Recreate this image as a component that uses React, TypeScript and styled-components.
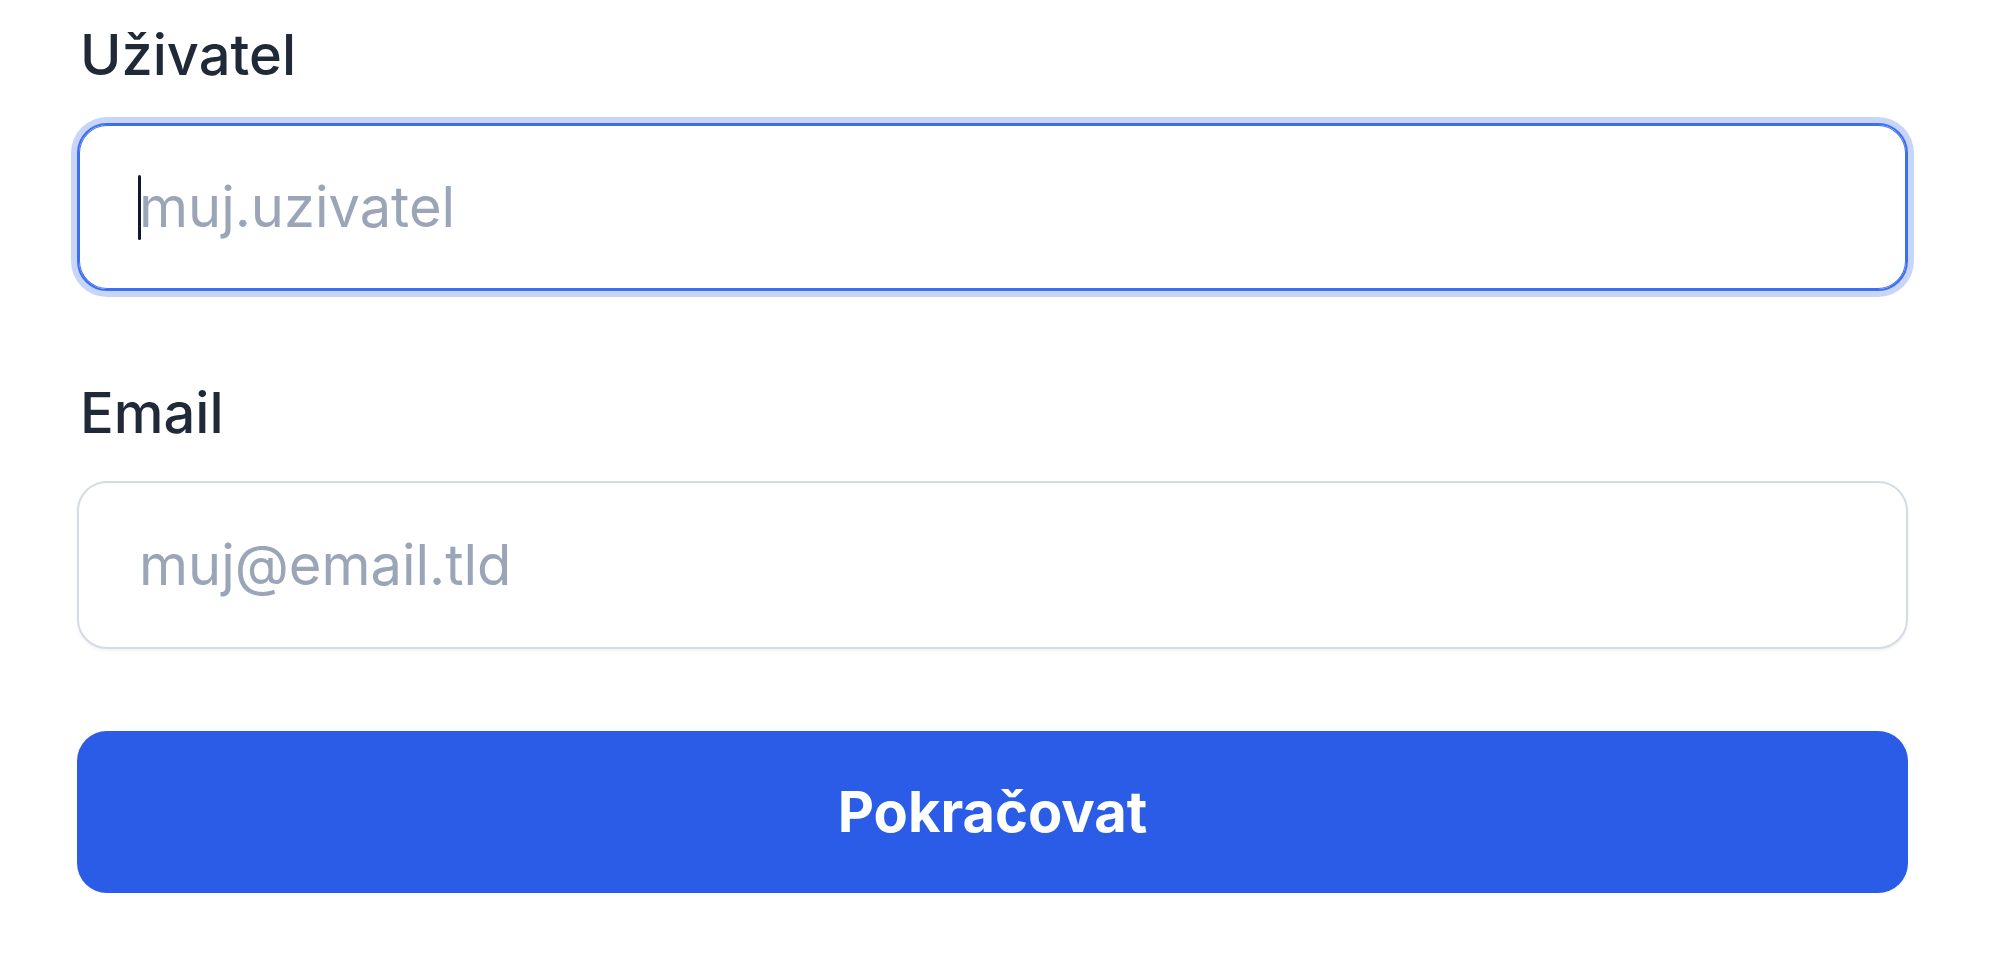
import React from "react";
import styled, { createGlobalStyle, css } from "styled-components";

const GlobalStyle = createGlobalStyle`
  html, body {
    margin: 0;
    padding: 0;
    background: #ffffff;
    font-family: Inter, "Noto Sans", "Liberation Sans", sans-serif;
  }
  * { box-sizing: border-box; }
`;

const Form = styled.form`
  display: flex;
  flex-direction: column;
  gap: 82px;
  width: 1831px;
  margin-left: 77px;
  padding-top: 15px;
`;

const Field = styled.div`
  display: flex;
  flex-direction: column;
  gap: 28px;
`;

const Label = styled.label`
  font-size: 56px;
  line-height: 80px;
  font-weight: 500;
  color: #1f2937;
  padding-left: 3px;
`;

const InputWrap = styled.div`
  position: relative;
`;

const Input = styled.input<{ $focused?: boolean }>`
  display: block;
  width: 100%;
  height: 168px;
  padding: 0 60px;
  border-radius: 30px;
  border: 2px solid #d4dbe6;
  background: #ffffff;
  font-family: Inter, "Noto Sans", "Liberation Sans", sans-serif;
  font-size: 56px;
  color: #0f172a;
  outline: none;
  box-shadow: 0 2px 3px rgba(15, 23, 42, 0.05);
  caret-color: transparent;
  &::placeholder {
    color: #9aa6b8;
    opacity: 1;
  }
  ${(p) =>
    p.$focused &&
    css`
      border-color: #3d6ef0;
      box-shadow: inset 0 0 0 1px #3d6ef0, 0 0 0 6px rgba(80, 125, 240, 0.32);
    `}
`;

const Caret = styled.span`
  position: absolute;
  left: 61px;
  top: 52px;
  width: 3px;
  height: 65px;
  border-radius: 2px;
  background: #111827;
  pointer-events: none;
`;

const Button = styled.button`
  height: 162px;
  border: none;
  border-radius: 30px;
  background: #2a5ce8;
  color: #ffffff;
  font-family: Inter, "Noto Sans", "Liberation Sans", sans-serif;
  font-size: 56px;
  font-weight: 700;
  cursor: pointer;
`;

export default function App() {
  return (
    <>
      <GlobalStyle />
      <Form onSubmit={(e) => e.preventDefault()}>
        <Field>
          <Label htmlFor="user">Uživatel</Label>
          <InputWrap>
            <Input id="user" $focused placeholder="muj.uzivatel" />
            <Caret />
          </InputWrap>
        </Field>
        <Field>
          <Label htmlFor="email">Email</Label>
          <InputWrap>
            <Input id="email" type="email" placeholder="muj@email.tld" />
          </InputWrap>
        </Field>
        <Button type="submit">Pokračovat</Button>
      </Form>
    </>
  );
}
